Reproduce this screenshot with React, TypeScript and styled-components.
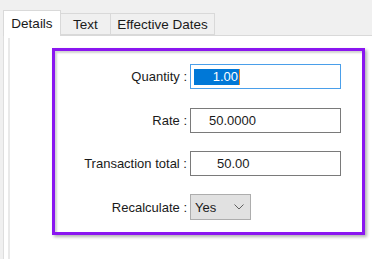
import React from 'react';
import styled, { createGlobalStyle } from 'styled-components';

const GlobalStyle = createGlobalStyle`
  html, body {
    margin: 0;
    padding: 0;
    background: #ffffff;
  }
  body {
    font-family: "Liberation Sans", Arial, sans-serif;
    font-size: 13px;
    color: #000;
  }
`;

const Window = styled('div')`
  width: 372px;
  height: 259px;
  background-color: #f0f0f0;
  display: flex;
  flex-direction: column;
  overflow: hidden;
  padding-left: 3px;
  box-sizing: border-box;
`;

const TabStrip = styled('div')`
  display: flex;
  align-items: flex-end;
  height: 36px;
  position: relative;
  z-index: 1;
`;

const Tab = styled('div')<{ $active?: boolean; $width: number }>`
  box-sizing: border-box;
  width: ${(p) => p.$width}px;
  height: ${(p) => (p.$active ? 26 : 22)}px;
  margin-bottom: ${(p) => (p.$active ? 0 : 1)}px;
  display: flex;
  align-items: center;
  justify-content: center;
  padding-top: ${(p) => (p.$active ? 0 : 1)}px;
  border: 1px solid #d9d9d9;
  border-bottom: ${(p) => (p.$active ? 'none' : '1px solid #d9d9d9')};
  background-color: ${(p) => (p.$active ? '#ffffff' : '#f0f0f0')};
  margin-left: ${(p) => (p.$active ? 0 : -1)}px;
  font-size: 13.5px;
  color: #1a1a1a;
`;

const Panel = styled('div')`
  flex: 1;
  background-color: #ffffff;
  border-top: 1px solid #d9d9d9;
  border-left: 1px solid #dedede;
  margin-top: -1px;
  padding: 2px 0 0 4px;
  display: flex;
`;

const Frame = styled('div')`
  flex: 1;
  border-left: 2px solid #e9e9e9;
  padding: 10px 7px 0 42px;
`;

const Highlight = styled('div')`
  width: 313px;
  height: 187px;
  box-sizing: border-box;
  border: 3px solid #8a16f0;
  box-shadow: 2px 2px 3px rgba(0, 0, 0, 0.3), inset 2px 2px 2px rgba(0, 0, 0, 0.18);
  padding: 13px 0 0 0;
  display: grid;
  grid-template-columns: 132px 151px;
  grid-auto-rows: 25px;
  column-gap: 3px;
  row-gap: 18.6px;
  align-items: center;
`;

const Label = styled('div')`
  text-align: right;
  white-space: nowrap;
  font-size: 13px;
  color: #1a1a1a;
`;

const TextBox = styled('div')<{ $focused?: boolean; $indent: number }>`
  box-sizing: border-box;
  height: 25px;
  border: 1px solid ${(p) => (p.$focused ? '#4a9fea' : '#7a7a7a')};
  background: #ffffff;
  display: flex;
  align-items: center;
  padding-left: ${(p) => p.$indent}px;
  font-size: 13px;
  color: #1a1a1a;
`;

const Selection = styled('span')`
  display: inline-flex;
  align-items: center;
  justify-content: flex-end;
  height: 16px;
  width: 45px;
  background-color: #0078d7;
  color: #ffffff;
  padding-right: 1px;
  box-sizing: border-box;
`;

const Caret = styled('span')`
  display: inline-block;
  width: 1px;
  height: 16px;
  background-color: #f08a24;
`;

const Select = styled('div')`
  box-sizing: border-box;
  width: 61px;
  height: 26px;
  border: 1px solid #adadad;
  background-color: #e1e1e1;
  display: flex;
  align-items: center;
  justify-content: space-between;
  padding: 0 6px 0 4px;
  font-size: 13px;
  color: #1a1a1a;
`;

function Chevron() {
  return (
    <svg width="10" height="6" viewBox="0 0 10 6">
      <path d="M0.5 0.5 L5 5 L9.5 0.5" fill="none" stroke="#606060" strokeWidth="1" />
    </svg>
  );
}

export default function App() {
  return (
    <>
      <GlobalStyle />
      <Window>
        <TabStrip>
          <Tab $active $width={58}>Details</Tab>
          <Tab $width={51}>Text</Tab>
          <Tab $width={105}>Effective Dates</Tab>
        </TabStrip>
        <Panel>
          <Frame>
            <Highlight>
              <Label>Quantity :</Label>
              <TextBox $focused $indent={3}>
                <Selection>1.00</Selection>
                <Caret />
              </TextBox>

              <Label>Rate :</Label>
              <TextBox $indent={18}>50.0000</TextBox>

              <Label>Transaction total :</Label>
              <TextBox $indent={26}>50.00</TextBox>

              <Label>Recalculate :</Label>
              <Select>
                <span>Yes</span>
                <Chevron />
              </Select>
            </Highlight>
          </Frame>
        </Panel>
      </Window>
    </>
  );
}
